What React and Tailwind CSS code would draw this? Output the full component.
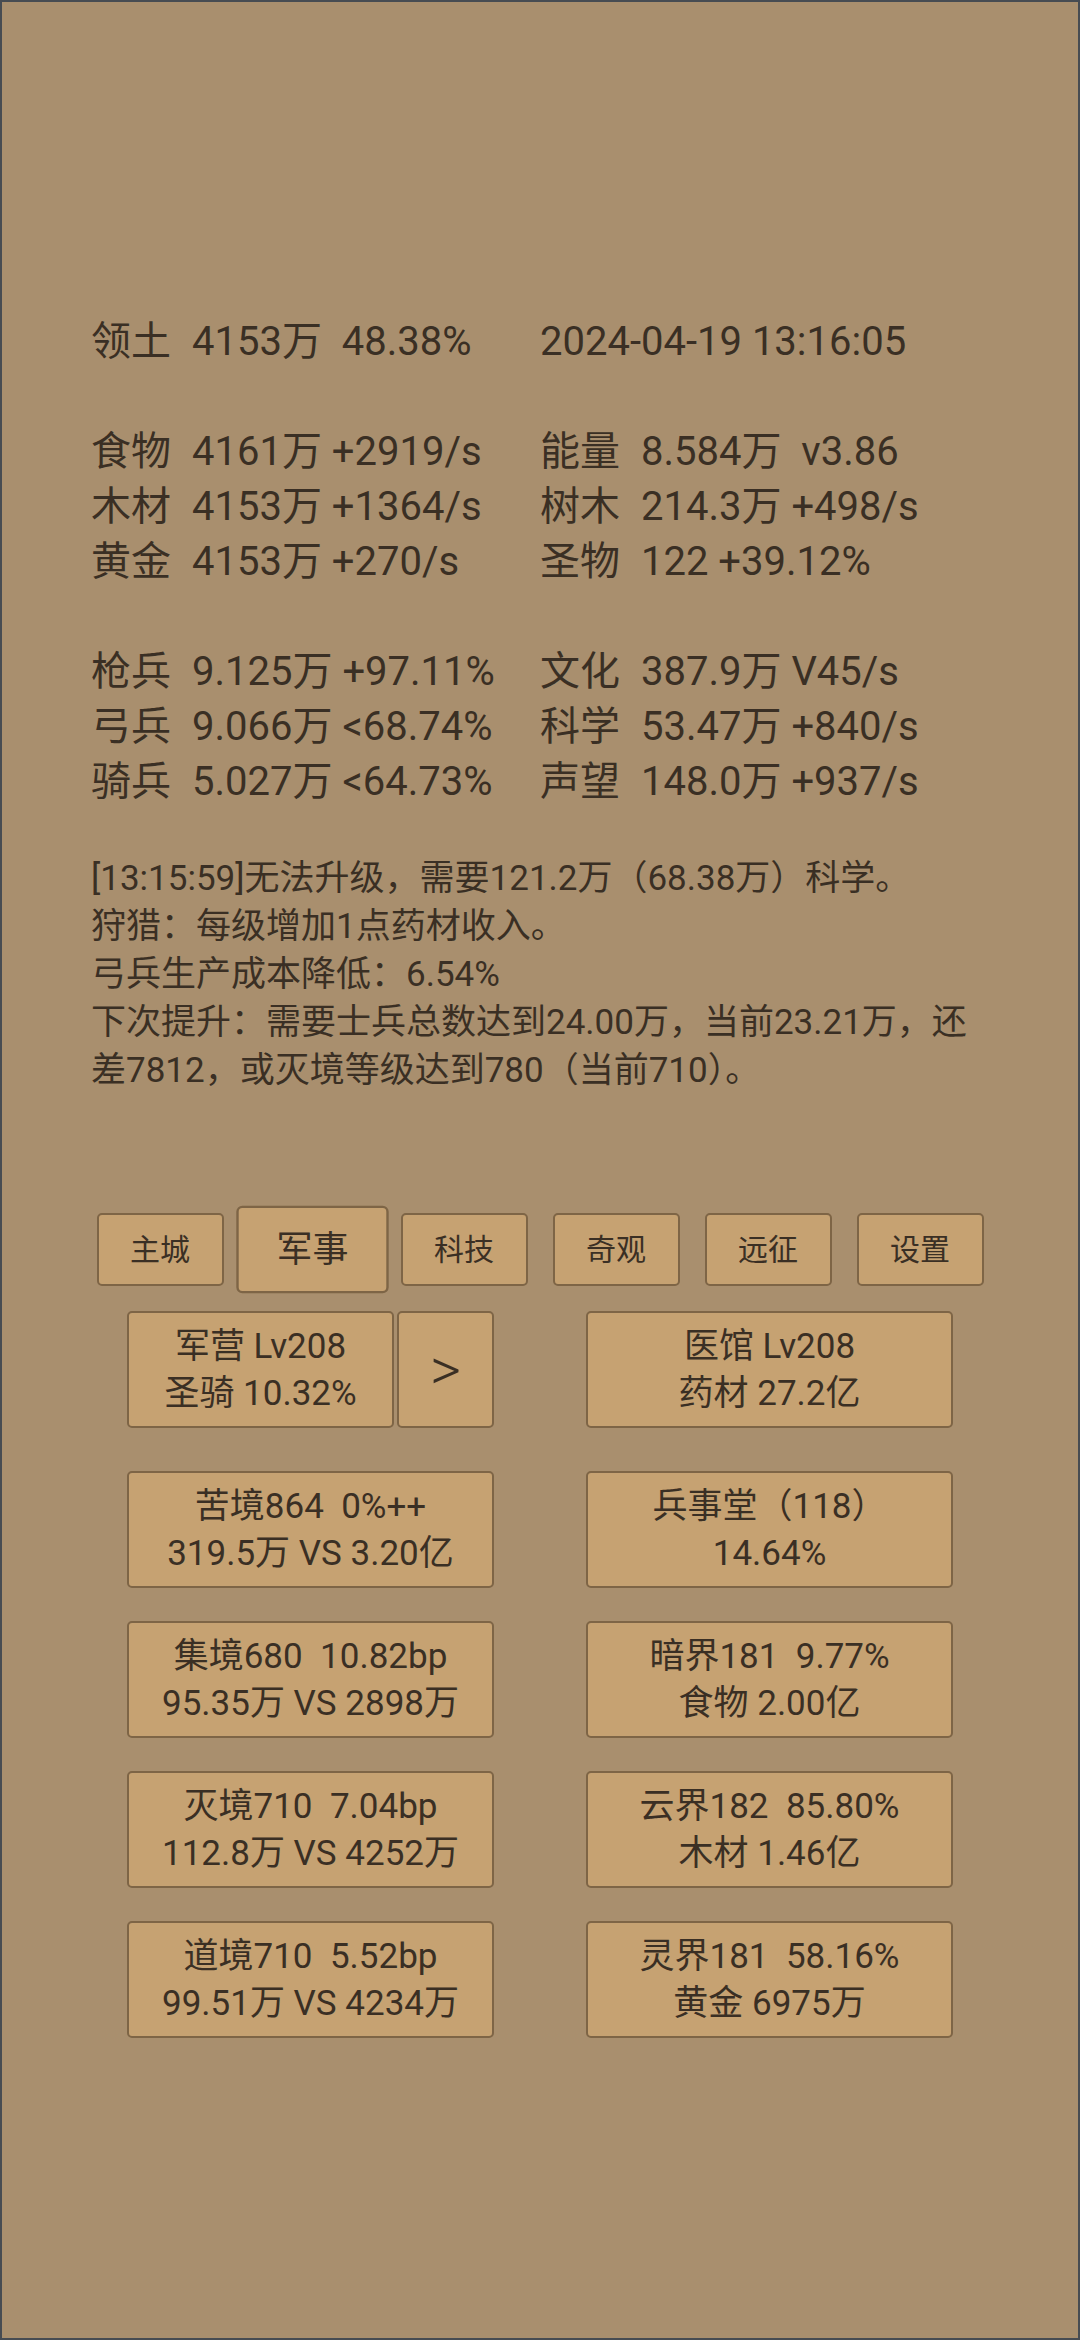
import React from "react";

const stats = [
  [["领土", "4153万  48.38%"], [null, "2024-04-19 13:16:05"]],
  null,
  [["食物", "4161万 +2919/s"], ["能量", "8.584万  v3.86"]],
  [["木材", "4153万 +1364/s"], ["树木", "214.3万 +498/s"]],
  [["黄金", "4153万 +270/s"], ["圣物", "122 +39.12%"]],
  null,
  [["枪兵", "9.125万 +97.11%"], ["文化", "387.9万 V45/s"]],
  [["弓兵", "9.066万 <68.74%"], ["科学", "53.47万 +840/s"]],
  [["骑兵", "5.027万 <64.73%"], ["声望", "148.0万 +937/s"]],
];

const messages = [
  "[13:15:59]无法升级，需要121.2万（68.38万）科学。",
  "狩猎：每级增加1点药材收入。",
  "弓兵生产成本降低：6.54%",
  "下次提升：需要士兵总数达到24.00万，当前23.21万，还差7812，或灭境等级达到780（当前710）。",
];

const tabs = ["主城", "军事", "科技", "奇观", "远征", "设置"];

const cards = [
  ["苦境864  0%++", "319.5万 VS 3.20亿"],
  ["兵事堂（118）", "14.64%"],
  ["集境680  10.82bp", "95.35万 VS 2898万"],
  ["暗界181  9.77%", "食物 2.00亿"],
  ["灭境710  7.04bp", "112.8万 VS 4252万"],
  ["云界182  85.80%", "木材 1.46亿"],
  ["道境710  5.52bp", "99.51万 VS 4234万"],
  ["灵界181  58.16%", "黄金 6975万"],
];

const btn = "bg-[#c6a272] border-2 border-[#7e6546] rounded-[5px]";

const Cell = ({ item }) => (
  <div className="flex whitespace-pre">
    {item[0] && <span className="inline-block w-[101px]">{item[0]}</span>}
    <span>{item[1]}</span>
  </div>
);

const Card = ({ lines, className = "" }) => (
  <div
    className={`${btn} h-[117px] flex flex-col items-center justify-center text-[35px] leading-[47px] whitespace-pre ${className}`}
  >
    {lines.map((l) => (
      <div key={l}>{l}</div>
    ))}
  </div>
);

export default function App() {
  return (
    <div className="min-h-[2340px] bg-[#a98f6e] border-2 border-[#474c52] text-[#3a2f24] font-['Roboto','Noto_Sans_CJK_SC',sans-serif]">
      <div className="pt-[312px] px-[89px]">
        {/* STATS */}
        <div className="text-[40px] leading-[55px]">
          {stats.map((row, i) =>
            row ? (
              <div key={i} className="grid grid-cols-2">
                <Cell item={row[0]} />
                <Cell item={row[1]} />
              </div>
            ) : (
              <div key={i} className="h-[55px]" />
            )
          )}
        </div>

        {/* LOG */}
        <div className="mt-[46px] text-[35px] leading-[48px]">
          {messages.map((m) => (
            <p key={m}>{m}</p>
          ))}
        </div>

        {/* TABS */}
        <div className="mt-[118px] flex justify-center gap-[25px]">
          {tabs.map((t) => (
            <div
              key={t}
              className={`${btn} w-[127px] h-[73px] flex items-center justify-center text-[30px] ${
                t === "军事" ? "scale-[1.2]" : ""
              }`}
            >
              {t}
            </div>
          ))}
        </div>

        {/* BUILDINGS */}
        <div className="mt-[25px] flex justify-center gap-[92px]">
          <div className="w-[367px] flex gap-[3px]">
            <Card lines={["军营 Lv208", "圣骑 10.32%"]} className="w-[267px]" />
            <div className={`${btn} w-[97px] h-[117px] flex items-center justify-center text-[60px] font-light`}>
              &gt;
            </div>
          </div>
          <Card lines={["医馆 Lv208", "药材 27.2亿"]} className="w-[367px]" />
        </div>

        <div className="mt-[43px] grid grid-cols-[367px_367px] justify-center gap-x-[92px] gap-y-[33px]">
          {cards.map((c) => (
            <Card key={c[0]} lines={c} />
          ))}
        </div>
      </div>
    </div>
  );
}
